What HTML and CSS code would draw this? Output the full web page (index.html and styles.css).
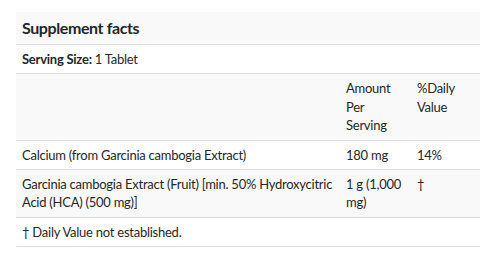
FILE: index.html
```html
<!DOCTYPE html>
<html lang="en">
<head>
  <meta charset="UTF-8">
  <meta name="viewport" content="width=device-width, initial-scale=1.0">
  <title>Supplement facts</title>
  <link rel="stylesheet" href="styles.css">
</head>
<body>

  <table class="facts">
    <colgroup>
      <col class="col-name">
      <col class="col-amount">
      <col class="col-dv">
    </colgroup>
    <thead>
      <tr class="title-row">
        <th colspan="3">Supplement facts</th>
      </tr>
    </thead>
    <tbody>
      <tr class="serving-row">
        <td colspan="3"><strong>Serving Size:</strong> 1 Tablet</td>
      </tr>
      <tr class="stripe">
        <td></td>
        <td>Amount Per Serving</td>
        <td>%Daily Value</td>
      </tr>
      <tr>
        <td>Calcium (from Garcinia cambogia Extract)</td>
        <td>180 mg</td>
        <td>14%</td>
      </tr>
      <tr class="stripe">
        <td>Garcinia cambogia Extract (Fruit) [min. 50% Hydroxycitric Acid (HCA) (500 mg)]</td>
        <td>1 g (1,000 mg)</td>
        <td>&dagger;</td>
      </tr>
      <tr class="note-row">
        <td colspan="3">&dagger; Daily Value not established.</td>
      </tr>
    </tbody>
  </table>

</body>
</html>
```

FILE: styles.css
```css
body {
  margin: 0;
  padding: 12px 12px 0 16px;
  font-family: Lato, "Open Sans", sans-serif;
  font-size: 13px;
  line-height: 18.4px;
  letter-spacing: -0.25px;
  color: #262626;
  background-color: #fff;
}

/* Facts table */
.facts {
  width: 464px;
  border-collapse: collapse;
  table-layout: fixed;
}
.col-name { width: 324px; }
.col-amount { width: 71px; }
.col-dv { width: 69px; }

.facts th,
.facts td {
  padding: 5px 6px;
  text-align: left;
  vertical-align: top;
  border-bottom: 1px solid #ddd;
}

.title-row th {
  padding: 6px;
  font-size: 16px;
  line-height: 20px;
  letter-spacing: -0.4px;
  font-weight: bold;
  background-color: #f9f9f9;
}

.serving-row strong { font-weight: bold; }

/* Zebra stripes */
.stripe td { background-color: #f9f9f9; }
```
